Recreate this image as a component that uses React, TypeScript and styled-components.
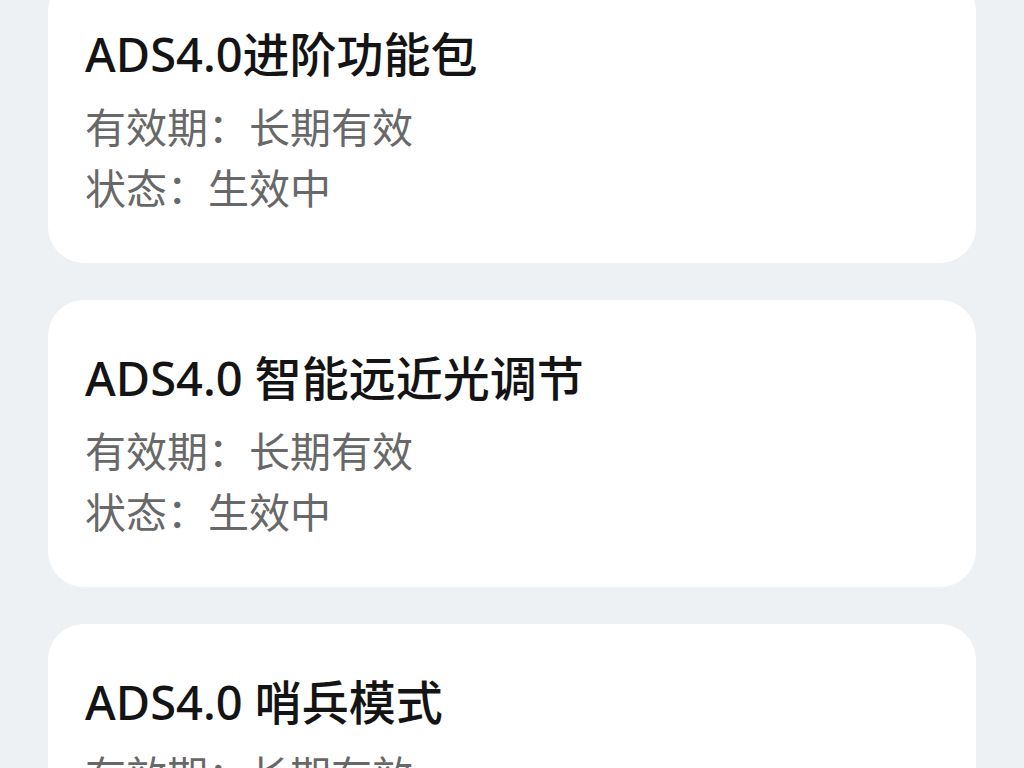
import styled, { createGlobalStyle } from "styled-components";

const GlobalStyle = createGlobalStyle`
  html, body {
    margin: 0;
    padding: 0;
    background: #eef1f3;
    font-family: "Noto Sans", "Noto Sans CJK SC", sans-serif;
  }
`;

const PackageList = styled.main`
  display: flex;
  flex-direction: column;
  gap: 37px;
  padding: 0 48px;
  margin-top: -24px;
  height: 792px;
  overflow: hidden;
`;

const PackageCard = styled.section`
  flex-shrink: 0;
  background: #ffffff;
  border-radius: 36px;
  padding: 48px 37px 44px;
  box-sizing: border-box;
  height: 287px;
`;

const PackageTitle = styled.h3`
  margin: 0 0 13px;
  font-size: 47px;
  line-height: 60px;
  font-weight: 500;
  color: #141414;
  white-space: nowrap;
`;

const InfoRow = styled.p`
  margin: 0;
  font-size: 41px;
  line-height: 61px;
  color: #686868;
  white-space: nowrap;
`;

interface IPackage {
  name: string;
  validity: string;
  status: string;
}

const packages: IPackage[] = [
  { name: "ADS4.0进阶功能包", validity: "长期有效", status: "生效中" },
  { name: "ADS4.0 智能远近光调节", validity: "长期有效", status: "生效中" },
  { name: "ADS4.0 哨兵模式", validity: "长期有效", status: "生效中" },
];

export default function App() {
  return (
    <>
      <GlobalStyle />
      <PackageList>
        {packages.map((pkg) => (
          <PackageCard key={pkg.name}>
            <PackageTitle>{pkg.name}</PackageTitle>
            <InfoRow>有效期：{pkg.validity}</InfoRow>
            <InfoRow>状态：{pkg.status}</InfoRow>
          </PackageCard>
        ))}
      </PackageList>
    </>
  );
}
